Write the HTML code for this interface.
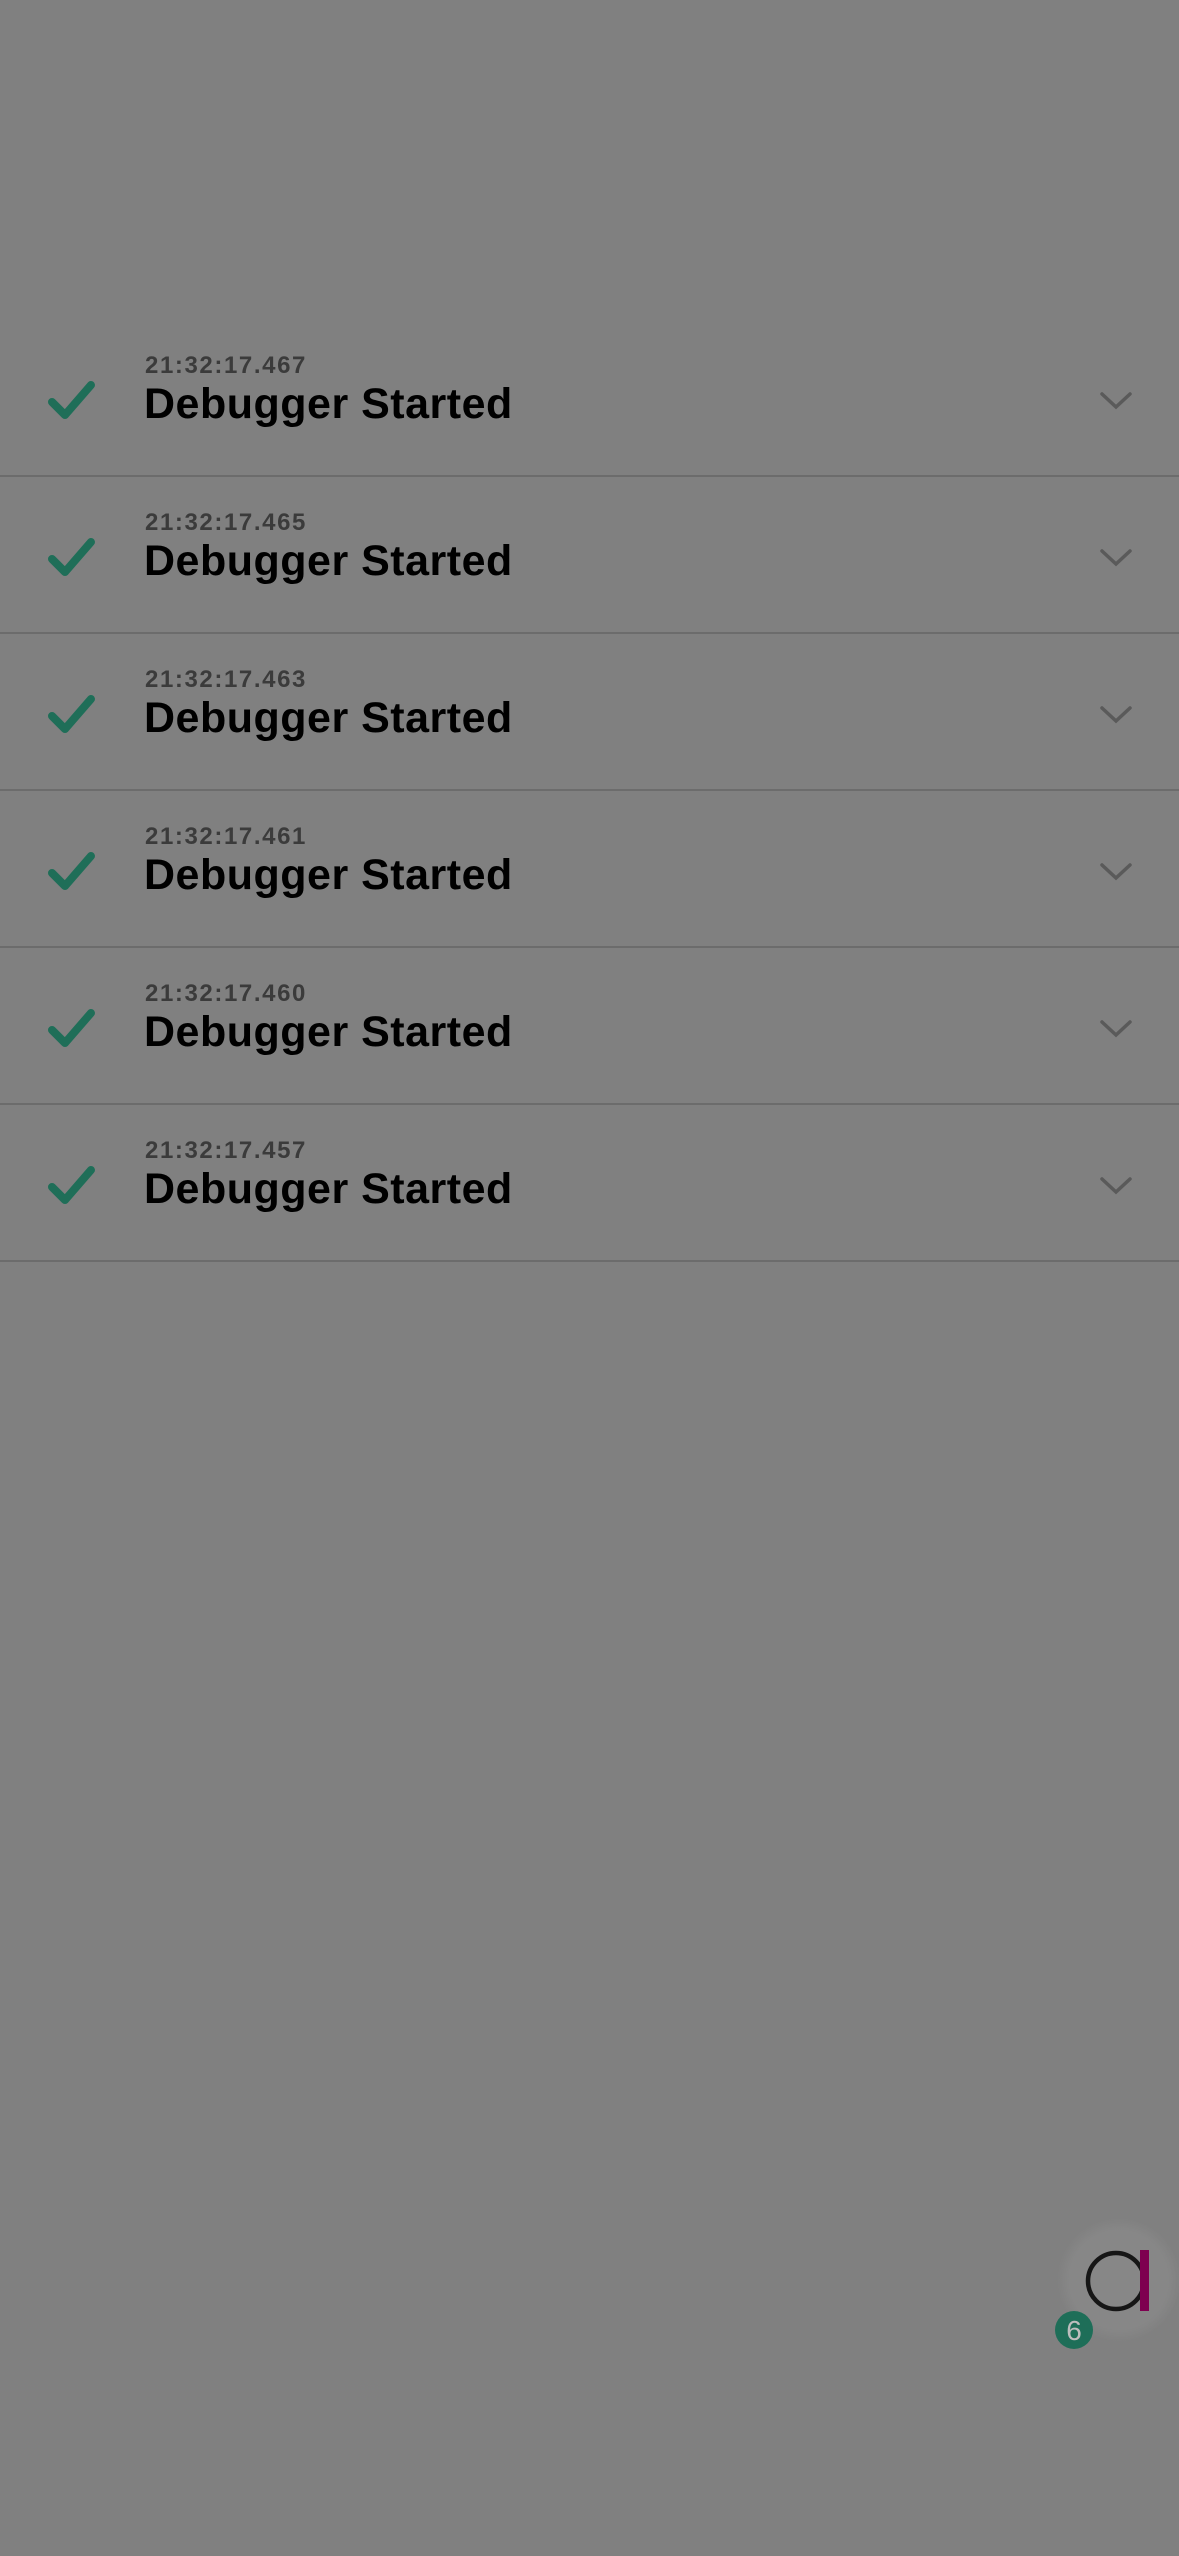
<!DOCTYPE html>
<html><head><meta charset="utf-8"><style>
html,body{margin:0;padding:0}
body{width:1179px;height:2556px;background:#808080;position:relative;overflow:hidden;font-family:"Liberation Sans",sans-serif}
.row{position:absolute;left:0;width:1179px;height:157px;border-bottom:2px solid #6c6c6c;box-sizing:border-box}
.ts{position:absolute;left:145px;top:32px;font-size:24px;font-weight:bold;color:#3b3b3b;letter-spacing:1.6px}
.tt{position:absolute;left:144px;top:60px;font-size:43px;font-weight:bold;color:#000;letter-spacing:0.5px}
.ck{position:absolute;left:46px;top:60px}
.cv{position:absolute;left:1098px;top:71px}
</style></head><body>
<div class="row" style="top:320px"><svg class="ck" width="50" height="42"><path d="M6 22 L19 35 L45 5" fill="none" stroke="#1f6e58" stroke-width="8" stroke-linecap="round" stroke-linejoin="round"/></svg><div class="ts">21:32:17.467</div><div class="tt">Debugger Started</div><svg class="cv" width="36" height="20"><path d="M4 3 L18 16 L32 3" fill="none" stroke="#5a5a5a" stroke-width="3.5" stroke-linecap="round"/></svg></div>
<div class="row" style="top:477px"><svg class="ck" width="50" height="42"><path d="M6 22 L19 35 L45 5" fill="none" stroke="#1f6e58" stroke-width="8" stroke-linecap="round" stroke-linejoin="round"/></svg><div class="ts">21:32:17.465</div><div class="tt">Debugger Started</div><svg class="cv" width="36" height="20"><path d="M4 3 L18 16 L32 3" fill="none" stroke="#5a5a5a" stroke-width="3.5" stroke-linecap="round"/></svg></div>
<div class="row" style="top:634px"><svg class="ck" width="50" height="42"><path d="M6 22 L19 35 L45 5" fill="none" stroke="#1f6e58" stroke-width="8" stroke-linecap="round" stroke-linejoin="round"/></svg><div class="ts">21:32:17.463</div><div class="tt">Debugger Started</div><svg class="cv" width="36" height="20"><path d="M4 3 L18 16 L32 3" fill="none" stroke="#5a5a5a" stroke-width="3.5" stroke-linecap="round"/></svg></div>
<div class="row" style="top:791px"><svg class="ck" width="50" height="42"><path d="M6 22 L19 35 L45 5" fill="none" stroke="#1f6e58" stroke-width="8" stroke-linecap="round" stroke-linejoin="round"/></svg><div class="ts">21:32:17.461</div><div class="tt">Debugger Started</div><svg class="cv" width="36" height="20"><path d="M4 3 L18 16 L32 3" fill="none" stroke="#5a5a5a" stroke-width="3.5" stroke-linecap="round"/></svg></div>
<div class="row" style="top:948px"><svg class="ck" width="50" height="42"><path d="M6 22 L19 35 L45 5" fill="none" stroke="#1f6e58" stroke-width="8" stroke-linecap="round" stroke-linejoin="round"/></svg><div class="ts">21:32:17.460</div><div class="tt">Debugger Started</div><svg class="cv" width="36" height="20"><path d="M4 3 L18 16 L32 3" fill="none" stroke="#5a5a5a" stroke-width="3.5" stroke-linecap="round"/></svg></div>
<div class="row" style="top:1105px"><svg class="ck" width="50" height="42"><path d="M6 22 L19 35 L45 5" fill="none" stroke="#1f6e58" stroke-width="8" stroke-linecap="round" stroke-linejoin="round"/></svg><div class="ts">21:32:17.457</div><div class="tt">Debugger Started</div><svg class="cv" width="36" height="20"><path d="M4 3 L18 16 L32 3" fill="none" stroke="#5a5a5a" stroke-width="3.5" stroke-linecap="round"/></svg></div>
<svg style="position:absolute;left:1040px;top:2200px" width="139" height="170">
<defs><radialGradient id="g"><stop offset="0.8" stop-color="#878787"/><stop offset="1" stop-color="#808080"/></radialGradient></defs>
<circle cx="79" cy="80" r="62" fill="url(#g)"/>
<circle cx="76" cy="81" r="28" fill="none" stroke="#161616" stroke-width="4.5"/>
<rect x="100" y="50" width="9" height="61" fill="#7e0050"/>
<circle cx="34" cy="130" r="19" fill="#1e6e58"/>
<text x="34" y="140" text-anchor="middle" font-family="Liberation Sans, sans-serif" font-size="28" fill="#bdbdbd">6</text>
</svg>
</body></html>
